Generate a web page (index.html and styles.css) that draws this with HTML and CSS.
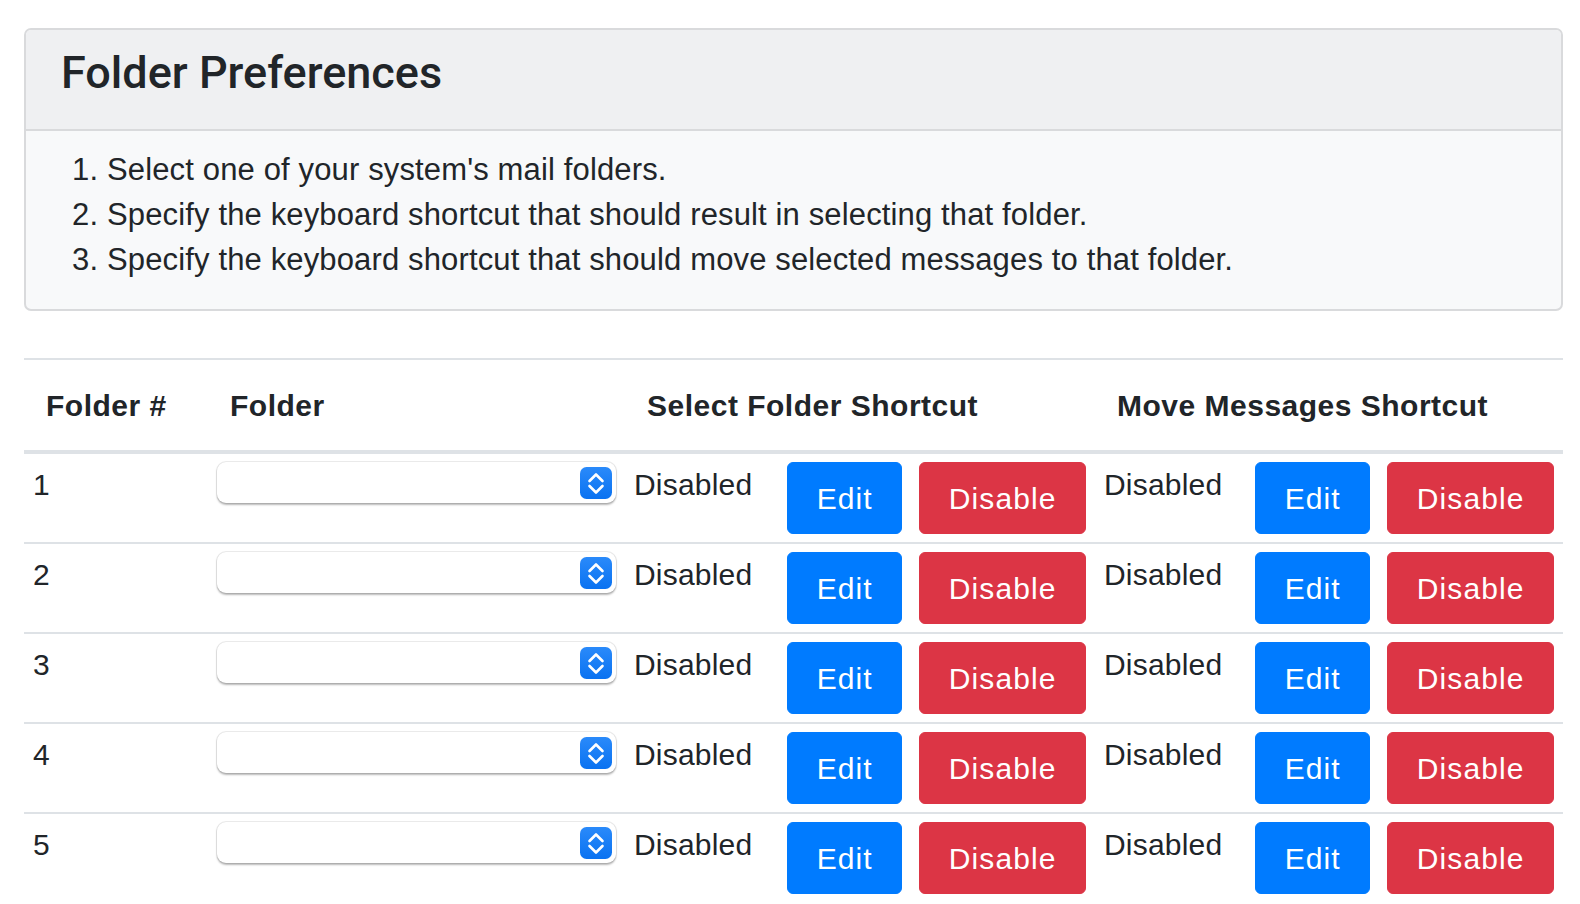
FILE: index.html
```html
<!DOCTYPE html>
<html lang="en">
<head>
<meta charset="utf-8">
<title>Folder Preferences</title>
<link rel="stylesheet" href="styles.css">
</head>
<body>
<main class="page">
  <section class="card">
    <header class="card-header">
      <h4 class="card-title">Folder Preferences</h4>
    </header>
    <div class="card-body">
      <ol class="steps">
        <li>Select one of your system's mail folders.</li>
        <li>Specify the keyboard shortcut that should result in selecting that folder.</li>
        <li>Specify the keyboard shortcut that should move selected messages to that folder.</li>
      </ol>
    </div>
  </section>

  <table class="prefs">
    <colgroup>
      <col class="c-num">
      <col class="c-folder">
      <col class="c-select">
      <col class="c-move">
    </colgroup>
    <thead>
      <tr>
        <th>Folder #</th>
        <th>Folder</th>
        <th>Select Folder Shortcut</th>
        <th>Move Messages Shortcut</th>
      </tr>
    </thead>
    <tbody id="rows">
      <tr>
        <td>1</td>
        <td><div class="popup"><select class="popup-select"></select><span class="stepper"><svg viewBox="0 0 32 32" width="32" height="32"><defs><linearGradient id="sg1" x1="0" y1="0" x2="0" y2="1"><stop offset="0" stop-color="#2a8afa"/><stop offset="1" stop-color="#0a72f1"/></linearGradient></defs><rect x="0" y="0" width="32" height="32" rx="6.5" fill="url(#sg1)"/><polyline points="9.5,14 16,7.5 22.5,14" fill="none" stroke="#fff" stroke-width="2.6" stroke-linecap="round" stroke-linejoin="round"/><polyline points="9.5,19 16,25.5 22.5,19" fill="none" stroke="#fff" stroke-width="2.6" stroke-linecap="round" stroke-linejoin="round"/></svg></span></div></td>
        <td><div class="shortcut"><span class="status">Disabled</span><span class="actions"><button class="btn btn-primary">Edit</button><button class="btn btn-danger">Disable</button></span></div></td>
        <td><div class="shortcut"><span class="status">Disabled</span><span class="actions"><button class="btn btn-primary">Edit</button><button class="btn btn-danger">Disable</button></span></div></td>
      </tr>
      <tr>
        <td>2</td>
        <td><div class="popup"><select class="popup-select"></select><span class="stepper"><svg viewBox="0 0 32 32" width="32" height="32"><defs><linearGradient id="sg2" x1="0" y1="0" x2="0" y2="1"><stop offset="0" stop-color="#2a8afa"/><stop offset="1" stop-color="#0a72f1"/></linearGradient></defs><rect x="0" y="0" width="32" height="32" rx="6.5" fill="url(#sg2)"/><polyline points="9.5,14 16,7.5 22.5,14" fill="none" stroke="#fff" stroke-width="2.6" stroke-linecap="round" stroke-linejoin="round"/><polyline points="9.5,19 16,25.5 22.5,19" fill="none" stroke="#fff" stroke-width="2.6" stroke-linecap="round" stroke-linejoin="round"/></svg></span></div></td>
        <td><div class="shortcut"><span class="status">Disabled</span><span class="actions"><button class="btn btn-primary">Edit</button><button class="btn btn-danger">Disable</button></span></div></td>
        <td><div class="shortcut"><span class="status">Disabled</span><span class="actions"><button class="btn btn-primary">Edit</button><button class="btn btn-danger">Disable</button></span></div></td>
      </tr>
      <tr>
        <td>3</td>
        <td><div class="popup"><select class="popup-select"></select><span class="stepper"><svg viewBox="0 0 32 32" width="32" height="32"><defs><linearGradient id="sg3" x1="0" y1="0" x2="0" y2="1"><stop offset="0" stop-color="#2a8afa"/><stop offset="1" stop-color="#0a72f1"/></linearGradient></defs><rect x="0" y="0" width="32" height="32" rx="6.5" fill="url(#sg3)"/><polyline points="9.5,14 16,7.5 22.5,14" fill="none" stroke="#fff" stroke-width="2.6" stroke-linecap="round" stroke-linejoin="round"/><polyline points="9.5,19 16,25.5 22.5,19" fill="none" stroke="#fff" stroke-width="2.6" stroke-linecap="round" stroke-linejoin="round"/></svg></span></div></td>
        <td><div class="shortcut"><span class="status">Disabled</span><span class="actions"><button class="btn btn-primary">Edit</button><button class="btn btn-danger">Disable</button></span></div></td>
        <td><div class="shortcut"><span class="status">Disabled</span><span class="actions"><button class="btn btn-primary">Edit</button><button class="btn btn-danger">Disable</button></span></div></td>
      </tr>
      <tr>
        <td>4</td>
        <td><div class="popup"><select class="popup-select"></select><span class="stepper"><svg viewBox="0 0 32 32" width="32" height="32"><defs><linearGradient id="sg4" x1="0" y1="0" x2="0" y2="1"><stop offset="0" stop-color="#2a8afa"/><stop offset="1" stop-color="#0a72f1"/></linearGradient></defs><rect x="0" y="0" width="32" height="32" rx="6.5" fill="url(#sg4)"/><polyline points="9.5,14 16,7.5 22.5,14" fill="none" stroke="#fff" stroke-width="2.6" stroke-linecap="round" stroke-linejoin="round"/><polyline points="9.5,19 16,25.5 22.5,19" fill="none" stroke="#fff" stroke-width="2.6" stroke-linecap="round" stroke-linejoin="round"/></svg></span></div></td>
        <td><div class="shortcut"><span class="status">Disabled</span><span class="actions"><button class="btn btn-primary">Edit</button><button class="btn btn-danger">Disable</button></span></div></td>
        <td><div class="shortcut"><span class="status">Disabled</span><span class="actions"><button class="btn btn-primary">Edit</button><button class="btn btn-danger">Disable</button></span></div></td>
      </tr>
      <tr>
        <td>5</td>
        <td><div class="popup"><select class="popup-select"></select><span class="stepper"><svg viewBox="0 0 32 32" width="32" height="32"><defs><linearGradient id="sg5" x1="0" y1="0" x2="0" y2="1"><stop offset="0" stop-color="#2a8afa"/><stop offset="1" stop-color="#0a72f1"/></linearGradient></defs><rect x="0" y="0" width="32" height="32" rx="6.5" fill="url(#sg5)"/><polyline points="9.5,14 16,7.5 22.5,14" fill="none" stroke="#fff" stroke-width="2.6" stroke-linecap="round" stroke-linejoin="round"/><polyline points="9.5,19 16,25.5 22.5,19" fill="none" stroke="#fff" stroke-width="2.6" stroke-linecap="round" stroke-linejoin="round"/></svg></span></div></td>
        <td><div class="shortcut"><span class="status">Disabled</span><span class="actions"><button class="btn btn-primary">Edit</button><button class="btn btn-danger">Disable</button></span></div></td>
        <td><div class="shortcut"><span class="status">Disabled</span><span class="actions"><button class="btn btn-primary">Edit</button><button class="btn btn-danger">Disable</button></span></div></td>
      </tr>
    </tbody>
  </table>
</main>
</body>
</html>
```

FILE: styles.css
```css
html {
  overflow: hidden;
}

body {
  margin: 0;
  background: #fff;
  color: #212529;
  font-family: "Liberation Sans", Arial, sans-serif;
  font-size: 30px;
  line-height: 45px;
  letter-spacing: 0.2px;
}

.page {
  padding: 28px 17px 0 24px;
}

/* ---------- card ---------- */
.card {
  background: #f8f9fa;
  border: 2px solid #d9dadc;
  border-radius: 7px;
  overflow: hidden;
}

.card-header {
  background: #eff0f2;
  border-bottom: 2px solid #d9dadc;
  padding: 16px 37px 29px 35px;
}

.card-title {
  margin: 0;
  font-family: Roboto, "Liberation Sans", sans-serif;
  font-weight: 500;
  font-size: 45px;
  line-height: 54px;
  letter-spacing: 0;
  color: #212529;
}

.card-body {
  padding: 16px 37px 27px 37px;
}

.steps {
  margin: 0;
  padding-left: 44px;
  font-size: 31px;
  line-height: 45px;
  letter-spacing: 0.14px;
}

/* ---------- table ---------- */
.prefs {
  margin-top: 47px;
  width: 100%;
  border-collapse: collapse;
  table-layout: fixed;
}

.c-num { width: 184px; }
.c-folder { width: 417px; }
.c-select { width: 470px; }

.prefs th {
  text-align: left;
  font-weight: 700;
  letter-spacing: 0.5px;
  padding: 23px 22px 22px 22px;
  border-top: 2px solid #dee2e6;
  border-bottom: 4px solid #dee2e6;
  vertical-align: bottom;
  white-space: nowrap;
}

.prefs td {
  padding: 8px 9px;
  border-top: 2px solid #dee2e6;
  vertical-align: top;
}

/* ---------- popup select ---------- */
.popup {
  display: flex;
  align-items: center;
  height: 41px;
  margin-top: 0;
  padding-right: 4px;
  background: #fff;
  border-radius: 9px;
  box-shadow: 0 0 0 1px rgba(0, 0, 0, 0.07), 0 1.5px 2px rgba(0, 0, 0, 0.28);
}

.popup-select {
  flex: 1;
  min-width: 0;
  height: 100%;
  border: 0;
  background: transparent;
  appearance: none;
  -webkit-appearance: none;
  outline: none;
}

.stepper {
  display: flex;
  width: 32px;
  height: 32px;
}

/* ---------- shortcut cells ---------- */
.shortcut {
  display: flex;
  align-items: flex-start;
}

.status {
  white-space: nowrap;
}

.actions {
  display: flex;
  margin-left: auto;
  gap: 17px;
}

.btn {
  font-family: "Liberation Sans", Arial, sans-serif;
  font-size: 30px;
  line-height: 45px;
  letter-spacing: 1.1px;
  padding: 12.5px 28.5px;
  border: 1px solid transparent;
  border-radius: 6px;
  color: #fff;
  cursor: pointer;
}

.btn-primary {
  background: #007bff;
  border-color: #007bff;
}

.btn-danger {
  background: #dc3545;
  border-color: #dc3545;
}
```
